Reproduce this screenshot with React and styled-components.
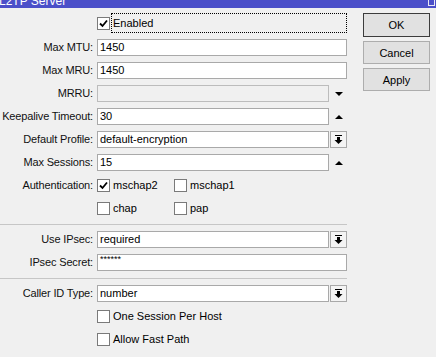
import React from 'react';
import styled, { createGlobalStyle } from 'styled-components';

const Global = createGlobalStyle`
  html, body {
    margin: 0;
    padding: 0;
    background: #f0f0f0;
  }
  body {
    font-family: "Liberation Sans", Arial, sans-serif;
    font-size: 11px;
    color: #000;
  }
`;

const Window = styled.div`
  width: 436px;
  height: 357px;
  overflow: hidden;
  background: #f0f0f0;
`;

const TitleBar = styled.div`
  height: 8px;
  background: #4b4fc9;
  display: flex;
  overflow: hidden;
`;

const TitleText = styled.span`
  align-self: flex-end;
  margin-bottom: 1px;
  margin-left: -1px;
  font-size: 12px;
  line-height: 12px;
  color: #fff;
  white-space: nowrap;
`;

const MaxBox = styled.span`
  margin-left: auto;
  margin-right: 1px;
  align-self: flex-start;
  width: 7px;
  height: 6px;
  border: 1px solid #e8e8f4;
  border-top: none;
  box-sizing: border-box;
`;

const Body = styled.div`
  display: flex;
  padding-top: 5px;
`;

const Form = styled.div`
  width: 347px;
  display: grid;
  grid-template-columns: 93px 1fr;
  column-gap: 4px;
  row-gap: 6px;
  align-items: center;
`;

const Label = styled.div`
  text-align: right;
  white-space: nowrap;
  line-height: 17px;
  letter-spacing: -0.15px;
  color: #111;
`;

const Cell = styled.div`
  display: flex;
  align-items: center;
  height: ${(p) => (p.tall ? '20px' : '17px')};
`;

const Separator = styled.div`
  grid-column: 1 / -1;
  height: 2px;
  box-sizing: border-box;
  border-bottom: 1px solid #c6c6c6;
`;

const Input = styled.div`
  flex: 1;
  height: 17px;
  box-sizing: border-box;
  border: 1px solid ${(p) => (p.disabled ? '#bcbcbc' : '#a9a9a9')};
  background: ${(p) => (p.disabled ? '#f0f0f0' : '#fff')};
  padding: 0 2px;
  line-height: ${(p) => (p.secret ? '9px' : '15px')};
  white-space: nowrap;
  overflow: hidden;
  font-size: ${(p) => (p.secret ? '9px' : '11px')};
`;

const Trailing = styled.div`
  width: 18px;
  height: 17px;
  flex: none;
  display: flex;
  align-items: center;
  justify-content: flex-end;
`;

const DropButton = styled.div`
  width: 17px;
  height: 17px;
  box-sizing: border-box;
  border: 1px solid #a9a9a9;
  background: #f4f4f4;
  display: flex;
  align-items: center;
  justify-content: center;
`;

const Box = styled.span`
  width: 13px;
  height: 13px;
  flex: none;
  box-sizing: border-box;
  border: 1px solid #7a7a7a;
  background: #fff;
  display: flex;
  align-items: center;
  justify-content: center;
`;

const FocusBox = styled.div`
  flex: 1;
  height: 20px;
  margin-left: 1px;
  box-sizing: border-box;
  border: 1px dotted #000;
  padding-left: 1px;
  line-height: 18px;
`;

const CheckItem = styled.div`
  width: ${(p) => (p.wide ? 'auto' : '77px')};
  display: flex;
  align-items: center;
  gap: 3px;
  line-height: 17px;
  white-space: nowrap;
`;

const Buttons = styled.div`
  margin-left: 16px;
  width: 67px;
  display: flex;
  flex-direction: column;
  gap: 4px;
`;

const Button = styled.div`
  height: ${(p) => (p.primary ? '24px' : '23px')};
  box-sizing: border-box;
  border: 1px solid ${(p) => (p.primary ? '#3c3c3c' : '#adadad')};
  background: #e1e1e1;
  display: flex;
  align-items: center;
  justify-content: center;
  font-size: 11px;
`;

const Tick = () => (
  <svg width="9" height="9" viewBox="0 0 9 9">
    <path d="M1 4.5 L3.5 7 L8 1.5" fill="none" stroke="#000" strokeWidth="1.8" />
  </svg>
);

const Check = ({ checked, label, wide }) => (
  <CheckItem wide={wide}>
    <Box>{checked && <Tick />}</Box>
    <span>{label}</span>
  </CheckItem>
);

const TriDown = () => (
  <svg width="17" height="8" viewBox="0 0 17 8">
    <polygon points="5,2 13,2 9,6" fill="#000" />
  </svg>
);

const TriUp = () => (
  <svg width="17" height="8" viewBox="0 0 17 8">
    <polygon points="5,6 13,6 9,2" fill="#000" />
  </svg>
);

const DropIcon = () => (
  <DropButton>
    <svg width="15" height="15" viewBox="0 0 15 15">
      <rect x="4" y="3" width="7" height="1" fill="#000" />
      <rect x="6" y="5" width="3" height="3" fill="#000" />
      <polygon points="3.5,8 11.5,8 7.5,12" fill="#000" />
    </svg>
  </DropButton>
);

const Field = ({ label, value, disabled, secret, trail }) => (
  <>
    <Label>{label}</Label>
    <Cell>
      <Input disabled={disabled} secret={secret}>{value}</Input>
      {trail === 'down' && <Trailing><TriDown /></Trailing>}
      {trail === 'up' && <Trailing><TriUp /></Trailing>}
      {trail === 'drop' && <Trailing><DropIcon /></Trailing>}
    </Cell>
  </>
);

export default function App() {
  return (
    <Window>
      <Global />
      <TitleBar>
        <TitleText>L2TP Server</TitleText>
        <MaxBox />
      </TitleBar>
      <Body>
        <Form>
          <Label />
          <Cell tall>
            <Box><Tick /></Box>
            <FocusBox>Enabled</FocusBox>
          </Cell>
          <Field label="Max MTU:" value="1450" />
          <Field label="Max MRU:" value="1450" />
          <Field label="MRRU:" value="" disabled trail="down" />
          <Field label="Keepalive Timeout:" value="30" trail="up" />
          <Field label="Default Profile:" value="default-encryption" trail="drop" />
          <Field label="Max Sessions:" value="15" trail="up" />
          <Label>Authentication:</Label>
          <Cell>
            <Check checked label="mschap2" />
            <Check label="mschap1" />
          </Cell>
          <Label />
          <Cell>
            <Check label="chap" />
            <Check label="pap" />
          </Cell>
          <Separator />
          <Field label="Use IPsec:" value="required" trail="drop" />
          <Field label="IPsec Secret:" value="******" secret />
          <Separator />
          <Field label="Caller ID Type:" value="number" trail="drop" />
          <Label />
          <Cell>
            <Check wide label="One Session Per Host" />
          </Cell>
          <Label />
          <Cell>
            <Check wide label="Allow Fast Path" />
          </Cell>
        </Form>
        <Buttons>
          <Button primary>OK</Button>
          <Button>Cancel</Button>
          <Button>Apply</Button>
        </Buttons>
      </Body>
    </Window>
  );
}
